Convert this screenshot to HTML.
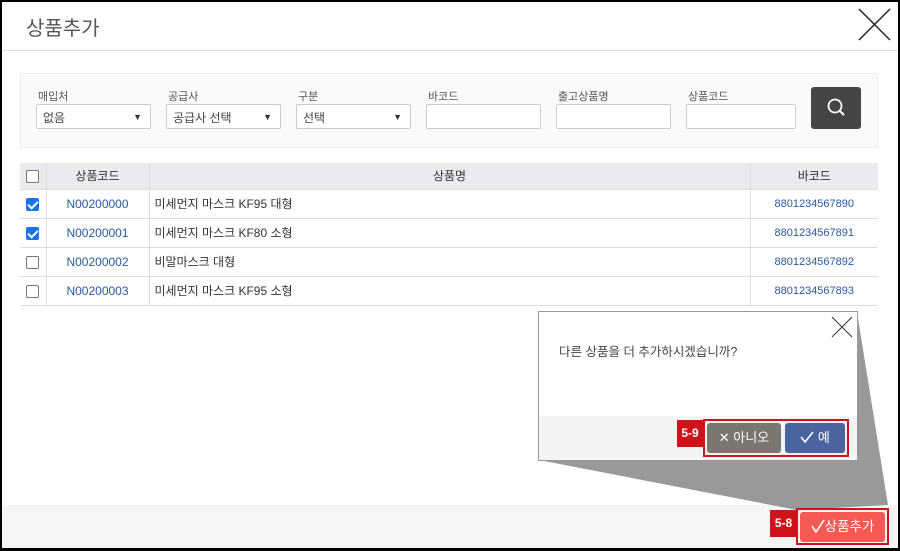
<!DOCTYPE html>
<html><head><meta charset="utf-8"><style>
*{box-sizing:border-box;margin:0;padding:0}
body{width:900px;height:551px;position:relative;overflow:hidden;background:#fff;font-family:"Liberation Sans","Noto Sans CJK KR",sans-serif;font-size:12px;color:#333}
.frame{position:absolute;left:0;top:0;width:900px;height:551px;border:2px solid #000;border-bottom-width:3px;pointer-events:none;z-index:20}
.abs{position:absolute}
.lbl{position:absolute;top:88px;font-size:11px;color:#555}
.inp{position:absolute;top:104px;height:25px;border:1px solid #ccc;background:#fff;border-radius:2px;font-size:12px;color:#444;padding:4px 6px}
.inp .ar{position:absolute;right:8px;top:7px;font-size:9px;color:#333}
table{position:absolute;left:20px;top:163px;width:858px;border-collapse:collapse;font-size:12px}
td,th{border-bottom:1px solid #ddd;height:29px;border-right:1px solid #ddd}
th{background:#e9ebee;font-weight:normal;height:26px;color:#333}
td:last-child,th:last-child{border-right:none}
.cb{width:13px;height:13px;border:1px solid #777;border-radius:2px;display:inline-block;vertical-align:middle}
.cb.on{background:#1a73e8;border-color:#1a73e8;position:relative}
.cb.on:after{content:"";position:absolute;left:3px;top:0px;width:4px;height:8px;border:solid #fff;border-width:0 2px 2px 0;transform:rotate(45deg)}
.code{color:#2a5aa0;text-align:center}
.bar{color:#2a5aa0;text-align:center;font-size:11px}
.red{background:#d0121b;color:#fff;font-size:12px;font-weight:bold;text-align:center;line-height:26px}
</style></head><body>
<div class="abs" style="left:26px;top:12px;font-size:20px;color:#555">상품추가</div>
<svg class="abs" style="left:858px;top:8px" width="33" height="33"><path d="M1 1L32 32M32 1L1 32" stroke="#222" stroke-width="1.5"/></svg>
<div class="abs" style="left:0;top:50px;width:900px;height:1px;background:#ddd"></div>
<div class="abs" style="left:20px;top:73px;width:858px;height:75px;background:#fafafa;border:1px solid #eee"></div>
<div class="lbl" style="left:38px">매입처</div>
<div class="lbl" style="left:168px">공급사</div>
<div class="lbl" style="left:298px">구분</div>
<div class="lbl" style="left:428px">바코드</div>
<div class="lbl" style="left:558px">출고상품명</div>
<div class="lbl" style="left:688px">상품코드</div>
<div class="inp" style="left:36px;width:115px">없음<span class="ar">▼</span></div>
<div class="inp" style="left:166px;width:115px">공급사 선택<span class="ar">▼</span></div>
<div class="inp" style="left:296px;width:115px">선택<span class="ar">▼</span></div>
<div class="inp" style="left:426px;width:115px"></div>
<div class="inp" style="left:556px;width:115px"></div>
<div class="inp" style="left:686px;width:110px"></div>
<div class="abs" style="left:811px;top:87px;width:50px;height:42px;background:#454545;border-radius:3px"><svg width="50" height="42"><circle cx="24" cy="19" r="6.5" fill="none" stroke="#fff" stroke-width="1.8"/><path d="M29 24L33 28" stroke="#fff" stroke-width="2"/></svg></div>
<table>
<tr><th style="width:26px"><span class="cb" style="background:#fff"></span></th><th style="width:103px">상품코드</th><th>상품명</th><th style="width:128px">바코드</th></tr>
<tr><td style="text-align:center"><span class="cb on"></span></td><td class="code">N00200000</td><td style="padding-left:5px">미세먼지 마스크 KF95 대형</td><td class="bar">8801234567890</td></tr>
<tr><td style="text-align:center"><span class="cb on"></span></td><td class="code">N00200001</td><td style="padding-left:5px">미세먼지 마스크 KF80 소형</td><td class="bar">8801234567891</td></tr>
<tr><td style="text-align:center"><span class="cb"></span></td><td class="code">N00200002</td><td style="padding-left:5px">비말마스크 대형</td><td class="bar">8801234567892</td></tr>
<tr><td style="text-align:center"><span class="cb"></span></td><td class="code">N00200003</td><td style="padding-left:5px">미세먼지 마스크 KF95 소형</td><td class="bar">8801234567893</td></tr>
</table>
<div class="abs" style="left:0;top:505px;width:900px;height:46px;background:#f5f5f5"></div>
<svg class="abs" style="left:0;top:0" width="900" height="551"><polygon points="539,460 797,510 888,505 857,312 857,460" fill="#999"/></svg>
<div class="abs" style="left:538px;top:311px;width:320px;height:150px;background:#fff;border:1px solid #999"></div>
<div class="abs" style="left:539px;top:416px;width:318px;height:44px;background:#f4f4f4"></div>
<svg class="abs" style="left:831px;top:316px" width="22" height="22"><path d="M1 1L21 21M21 1L1 21" stroke="#333" stroke-width="1"/></svg>
<div class="abs" style="left:559px;top:341px;font-size:12.5px;color:#444">다른 상품을 더 추가하시겠습니까?</div>
<div class="abs" style="left:703px;top:419px;width:146px;height:38px;border:2px solid #d0121b"></div>
<div class="abs red" style="left:677px;top:420px;width:26px;height:27px">5-9</div>
<div class="abs" style="left:707px;top:423px;width:74px;height:30px;background:#7a7670;border-radius:3px;color:#fff;font-size:13px;line-height:30px;text-align:center">✕ 아니오</div>
<div class="abs" style="left:785px;top:423px;width:60px;height:30px;background:#4a64a0;border-radius:3px;color:#fff;font-size:13px;line-height:30px;text-align:center"><svg width="14" height="12" style="vertical-align:-1px"><path d="M1 6L5 11L13 1" fill="none" stroke="#fff" stroke-width="1.6"/></svg> 예</div>
<div class="abs" style="left:796px;top:508px;width:93px;height:37px;border:2px solid #d0121b"></div>
<div class="abs red" style="left:770px;top:510px;width:27px;height:27px">5-8</div>
<div class="abs" style="left:800px;top:512px;width:85px;height:30px;background:#f55a55;border-radius:3px;color:#fff;font-size:13.5px;line-height:30px;text-align:center"><svg width="14" height="14" style="vertical-align:-2px"><path d="M1 7L5 13L13 1" fill="none" stroke="#fff" stroke-width="1.6"/></svg>상품추가</div>
<div class="frame"></div>
</body></html>
